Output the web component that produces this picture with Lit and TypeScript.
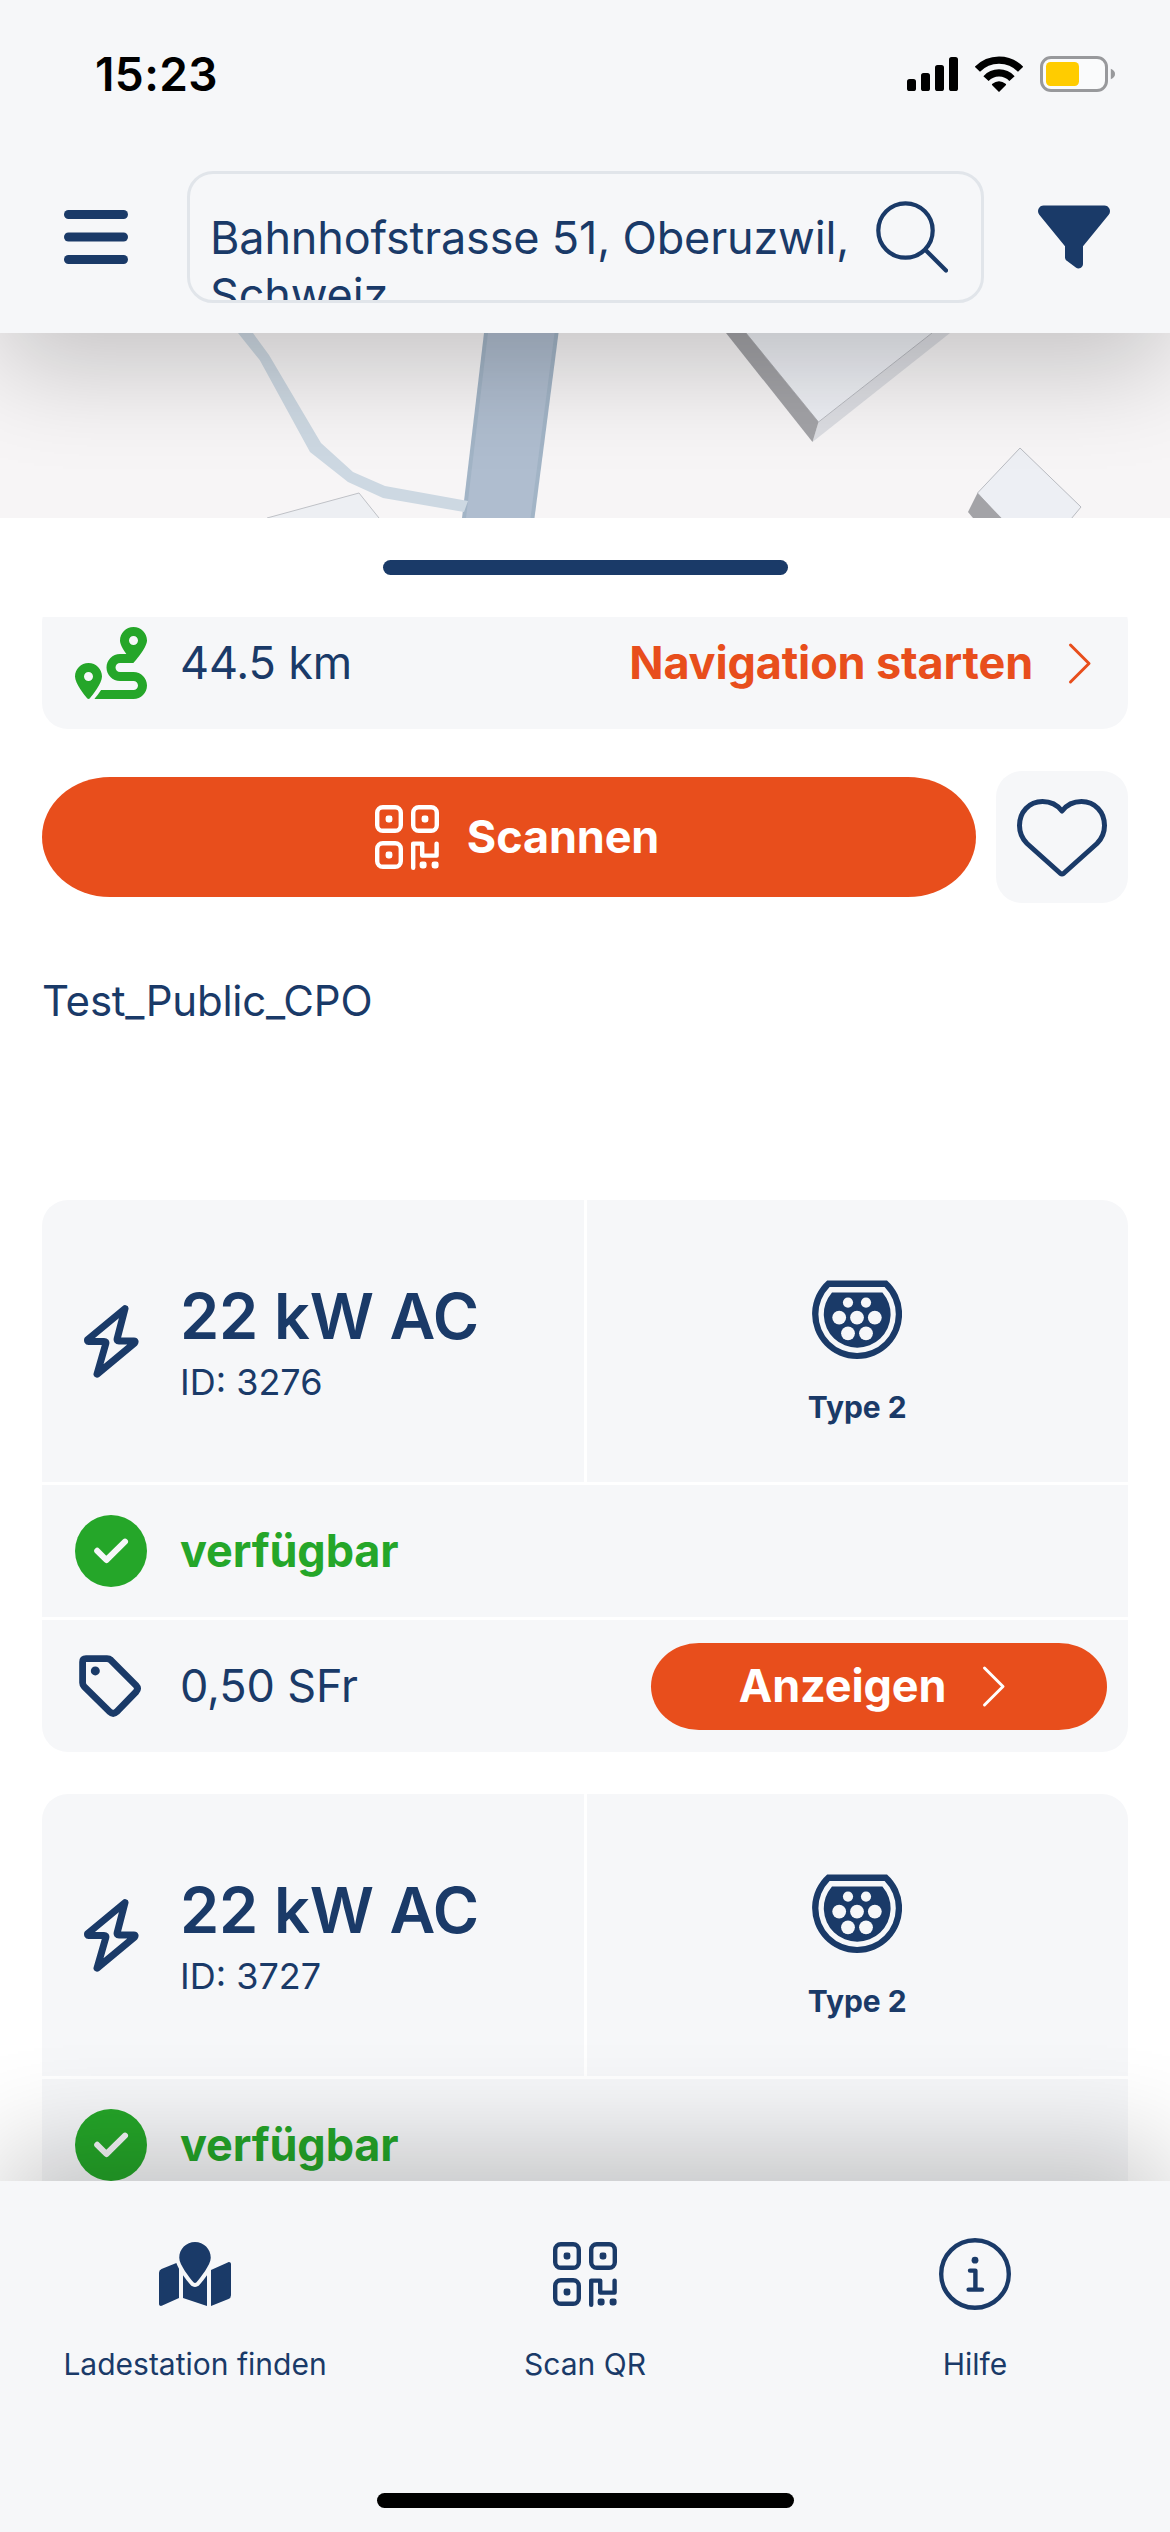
import { LitElement, html, css, svg, nothing } from "lit";
import { customElement, property } from "lit/decorators.js";

const chevron = html`<svg width="24" height="43" viewBox="0 0 24 43" fill="none" stroke="currentColor" stroke-width="3" stroke-linecap="round" stroke-linejoin="round"><path d="M2.5 3 L21 21.5 L2.5 40" /></svg>`;

const qrIcon = html`<svg width="64" height="65" viewBox="0 0 64 65" fill="none" stroke="currentColor" stroke-width="4.4" stroke-linecap="round" stroke-linejoin="round">
  ${[[0, 0], [36, 0], [0, 36]].map(
    ([x, y]) => svg`<rect x=${x + 2.2} y=${y + 2.2} width="23.6" height="23.6" rx="5.6" /><rect x=${x + 10.6} y=${y + 10.6} width="6.8" height="6.8" rx="2.4" fill="currentColor" stroke="none" />`
  )}
  <path d="M38.2 62.8 V38.6 H47.2 V50.6 H61.6 V38.6" />
  <rect x="44.6" y="56.4" width="7" height="7" rx="2.4" fill="currentColor" stroke="none" />
  <rect x="56.6" y="56.4" width="7" height="7" rx="2.4" fill="currentColor" stroke="none" />
</svg>`;

const mapIcon = html`<svg width="72" height="64" viewBox="0 0 576 512" fill="currentColor"><path d="M288 0c-69.59 0-126 56.41-126 126 0 56.26 82.35 158.8 113.9 196.02 6.39 7.54 17.82 7.54 24.2 0C331.65 284.8 414 182.26 414 126 414 56.41 357.59 0 288 0zM20.12 215.95A32.006 32.006 0 0 0 0 245.66v250.32c0 11.32 11.43 19.06 21.94 14.86L160 448V214.92c-8.84-15.98-16.07-31.54-21.25-46.42L20.12 215.95zM288 359.67c-14.07 0-27.38-6.18-36.51-16.96-19.66-23.2-40.57-49.62-59.49-76.72v182l192 64V266c-18.92 27.09-39.82 53.52-59.49 76.72-9.13 10.77-22.44 16.95-36.51 16.95zm266.06-198.51L416 224v288l139.88-55.95A31.996 31.996 0 0 0 576 426.34V176.02c0-11.32-11.43-19.06-21.94-14.86z" /></svg>`;

const infoIcon = html`<svg width="72" height="72" viewBox="0 0 72 72" fill="none" stroke="currentColor" stroke-width="4.4" stroke-linecap="round" stroke-linejoin="round">
  <circle cx="36" cy="36" r="33.8" />
  <path d="M31 32.6 H36.4 V51.6 M29.6 51.6 H43" />
  <circle cx="36" cy="22.2" r="3.4" fill="currentColor" stroke="none" />
</svg>`;

const boltIcon = html`<svg width="55" height="73" viewBox="0 0 55 73" fill="none" stroke="currentColor" stroke-width="7" stroke-linecap="round" stroke-linejoin="round"><path d="M41 3.6 L3.6 34.6 Q3.2 36.4 4.6 36.4 H20 Q22.4 36.4 21.8 38.6 L13 69.2 L50.6 38 Q51.8 36 50 36 H35 Q32.6 36 33.2 33.6 Z" /></svg>`;

const tagIcon = html`<svg width="64" height="62" viewBox="0 0 64 62" fill="none" stroke="currentColor" stroke-width="6.8" stroke-linejoin="round">
  <path d="M7 3.6 H28 Q30.2 3.6 31.8 5.1 L57 30.4 Q60 33.6 57 36.8 L37.6 56.8 Q34.2 60 30.8 56.8 L5.2 31.6 Q3.6 30 3.6 27.8 V7 Q3.6 3.6 7 3.6 Z" />
  <circle cx="16.3" cy="15.9" r="4.5" fill="currentColor" stroke="none" />
</svg>`;

const checkIcon = html`<svg width="72" height="72" viewBox="0 0 72 72" fill="none">
  <circle cx="36" cy="36" r="36" fill="#25a629" />
  <path d="M22.2 35.8 L31.4 45 L50 26.6" stroke="#f6f7f9" stroke-width="6" stroke-linecap="round" stroke-linejoin="round" />
</svg>`;

const routeIcon = html`<svg width="72" height="72" viewBox="0 0 512 512" fill="#25a629"><path d="M416 320h-96c-17.6 0-32-14.4-32-32s14.4-32 32-32h96s96-107 96-160-43-96-96-96-96 43-96 96c0 25.5 22.2 63.4 45.3 96H320c-52.9 0-96 43.1-96 96s43.1 96 96 96h96c17.6 0 32 14.4 32 32s-14.4 32-32 32H185.5c-16 24.8-33.8 47.7-47.3 64H416c52.9 0 96-43.1 96-96s-43.1-96-96-96zm0-256c17.7 0 32 14.3 32 32s-14.3 32-32 32-32-14.3-32-32 14.3-32 32-32zM96 256c-53 0-96 43-96 96 0 50 70 135 86 154 6 7 14 7 20 0C122 487 192 402 192 352c0-53-43-96-96-96zm0 128c-17.7 0-32-14.3-32-32s14.3-32 32-32 32 14.3 32 32-14.3 32-32 32z" /></svg>`;

const plugIcon = html`<svg width="90" height="80" viewBox="0 0 90 80">
  <path fill="#1a3a68" d="M15.2 .4 H75 A45 45 0 1 1 15.2 .4 Z" />
  <path fill="#f6f7f9" d="M17.6 7 H72.6 A38.7 38.7 0 1 1 17.6 7 Z" />
  <path fill="#1a3a68" d="M20 12.4 H70.4 A33.4 33.4 0 1 1 20 12.4 Z" />
  <g fill="#f6f7f9">
    ${[[36, 22.6, 5.1], [54, 22.6, 5.1], [27.2, 37.6, 6.9], [45, 37.6, 6.9], [62.8, 37.6, 6.9], [36, 53.3, 6.9], [54, 53.3, 6.9]].map(
      ([x, y, r]) => svg`<circle cx=${x} cy=${y} r=${r} />`
    )}
  </g>
</svg>`;

@customElement("station-card")
export class StationCard extends LitElement {
  @property() power = "";
  @property() stationId = "";
  @property() price = "";

  static styles = css`
    :host { display: flex; flex-direction: column; gap: 3px; border-radius: 26px; overflow: hidden; flex: none; color: #1a3a68; }
    svg { display: block; flex: none; }
    .top { display: flex; gap: 3px; height: 282px; }
    .cell { flex: 1; background: #f6f7f9; display: flex; align-items: center; box-sizing: border-box; }
    .icon { width: 72px; display: flex; justify-content: center; margin: 0 33px; flex: none; }
    .info { display: flex; flex-direction: column; padding-top: 1px; }
    .power { font-size: 63px; font-weight: 600; line-height: 76px; letter-spacing: -0.15px; }
    .id { font-size: 36px; line-height: 45px; margin-top: 6px; }
    .plug { flex-direction: column; padding-top: 80px; }
    .plug span { font-size: 30px; font-weight: 700; line-height: 36px; margin-top: 29px; }
    .row { height: 132px; background: #f6f7f9; display: flex; align-items: center; font-size: 45px; letter-spacing: -0.15px; }
    .row span { padding-bottom: 2px; }
    .ok { color: #25a629; font-weight: 700; }
    .grow { flex: 1; }
    .btn { width: 456px; height: 87px; box-sizing: border-box; padding-right: 13px; margin-right: 21px; background: #e84e1c; color: #fff; border-radius: 48px / 43.5px; display: flex; align-items: center; justify-content: center; font-weight: 700; gap: 36px; }
  `;

  render() {
    return html`
      <div class="top">
        <div class="cell">
          <div class="icon">${boltIcon}</div>
          <div class="info"><div class="power">${this.power}</div><div class="id">ID: ${this.stationId}</div></div>
        </div>
        <div class="cell plug">${plugIcon}<span>Type 2</span></div>
      </div>
      <div class="row"><div class="icon">${checkIcon}</div><span class="ok">verfügbar</span></div>
      ${this.price
        ? html`<div class="row">
            <div class="icon">${tagIcon}</div>
            <span class="grow">${this.price}</span>
            <div class="btn"><span>Anzeigen</span>${chevron}</div>
          </div>`
        : nothing}
    `;
  }
}

@customElement("app-root")
export class AppRoot extends LitElement {
  static styles = css`
    :host { display: flex; flex-direction: column; width: 1170px; height: 2532px; overflow: hidden; background: #fff; color: #1a3a68; font-family: Inter, "Liberation Sans", sans-serif; font-size: 45px; }
    svg { display: block; flex: none; }
    .header { height: 333px; flex: none; background: #f6f7f9; position: relative; z-index: 2; box-shadow: 0 36px 96px rgba(0, 0, 0, 0.2); }
    .status { height: 132px; box-sizing: border-box; padding: 16px 55px 0 95px; display: flex; align-items: center; justify-content: space-between; color: #000; }
    .time { font-size: 46px; font-weight: 600; letter-spacing: 0.4px; }
    .signals { display: flex; align-items: center; gap: 17px; }
    .search { display: flex; align-items: center; height: 132px; padding: 0 60px 0 64px; margin-top: 39px; }
    .field { width: 797px; height: 132px; box-sizing: border-box; border: 3px solid #e1e5ea; border-radius: 26px; margin: 0 54px 0 59px; display: flex; overflow: hidden; padding: 35px 33px 0 20px; justify-content: space-between; }
    .query { line-height: 57px; width: 660px; letter-spacing: -0.16px; }
    .glass { margin-top: -9px; }
    .map { height: 185px; flex: none; }
    .sheet { flex: 1; min-height: 0; background: #fff; display: flex; flex-direction: column; }
    .grip { width: 405px; height: 15px; border-radius: 8px; background: #1a3a68; margin: 42px auto; flex: none; }
    .scroll { flex: 1; min-height: 0; overflow: hidden; display: flex; flex-direction: column; padding: 0 42px; }
    .route { margin-top: -20px; height: 132px; flex: none; background: #f6f7f9; border-radius: 26px; display: flex; align-items: center; padding: 0 36px 0 33px; letter-spacing: -0.15px; }
    .km { margin-left: 33px; flex: 1; padding-bottom: 2px; }
    .start { color: #e84e1c; font-weight: 700; margin-right: 35px; padding-bottom: 2px; }
    .start-chevron { color: #e84e1c; }
    .actions { display: flex; align-items: center; gap: 20px; height: 132px; margin-top: 42px; flex: none; }
    .scan { flex: 1; height: 120px; box-sizing: border-box; padding-left: 16px; background: #e84e1c; color: #fff; border-radius: 68px / 60px; display: flex; align-items: center; justify-content: center; gap: 28px; font-weight: 700; letter-spacing: -0.15px; }
    .scan span { padding-bottom: 2px; }
    .fav { width: 132px; height: 132px; box-sizing: border-box; padding-top: 2px; border-radius: 26px; background: #f6f7f9; display: flex; align-items: center; justify-content: center; }
    .operator { font-size: 42px; line-height: 54px; margin: 71px 0 172px 0; flex: none; letter-spacing: -0.22px; }
    station-card + station-card { margin-top: 42px; }
    .tabs { height: 351px; flex: none; background: #f6f7f9; position: relative; z-index: 2; box-shadow: 0 -36px 96px rgba(0, 0, 0, 0.2); display: flex; flex-direction: column; align-items: center; }
    .items { display: flex; align-self: stretch; height: 312px; }
    .tab { flex: 1; display: flex; flex-direction: column; align-items: center; font-size: 30px; line-height: 36px; padding-top: 57px; }
    .glyph { height: 72px; display: flex; align-items: center; margin-bottom: 36px; }
    .home { width: 417px; height: 15px; border-radius: 8px; background: #000; }
  `;

  render() {
    return html`
      <div class="header">
        <div class="status">
          <div class="time">15:23</div>
          <div class="signals">
            <svg width="51" height="36" viewBox="0 0 51 36"><rect x="0" y="23" width="9" height="12" rx="2.6" /><rect x="14" y="17" width="9" height="18" rx="2.6" /><rect x="28" y="9" width="9" height="26" rx="2.6" /><rect x="42" y="1" width="9" height="34" rx="2.6" /></svg>
            <svg width="48" height="36" viewBox="0 0 48 36"><g fill="none" stroke="#000" stroke-width="7.2"><path d="M2.4 13.3 A30 30 0 0 1 45.6 13.3" /><path d="M11 22.6 A17.8 17.8 0 0 1 37 22.6" /></g><path d="M24 36 L17 29 Q16.6 28.3 17.4 27.7 Q20.4 25.2 24 25.2 T30.6 27.7 Q31.4 28.3 31 29 Z" /></svg>
            <svg width="75" height="36" viewBox="0 0 75 36"><rect x="1.5" y="1.5" width="65" height="33" rx="9.5" fill="#fafbfc" stroke="#98999c" stroke-width="3" /><rect x="6" y="6" width="33" height="24" rx="4.5" fill="#ffcc00" /><path fill="#98999c" d="M70.8 12.8 Q75 14.5 75 18 T70.8 23.2 Z" /></svg>
          </div>
        </div>
        <div class="search">
          <svg width="64" height="54" viewBox="0 0 64 54" fill="#1a3a68"><rect width="64" height="9" rx="4.5" /><rect y="22.5" width="64" height="9" rx="4.5" /><rect y="45" width="64" height="9" rx="4.5" /></svg>
          <div class="field">
            <div class="query">Bahnhofstrasse 51, Oberuzwil, Schweiz</div>
            <svg class="glass" width="73" height="73" viewBox="0 0 73 73" fill="none" stroke="#1a3a68" stroke-width="4.2" stroke-linecap="round"><circle cx="30.5" cy="30.5" r="27.2" /><path d="M50.5 50 L71 70.5" /></svg>
          </div>
          <svg width="72" height="72" viewBox="0 0 512 512" fill="#1a3a68"><path d="M3.9 54.9C10.5 40.9 24.5 32 40 32H472c15.5 0 29.5 8.9 36.1 22.9s4.6 30.5-5.2 42.5L320 320.9V448c0 12.1-6.8 23.2-17.7 28.6s-23.8 4.3-33.5-3l-64-48c-8.1-6-12.8-15.5-12.8-25.6V320.9L9 97.3C-.7 85.4-2.8 68.8 3.9 54.9z" /></svg>
        </div>
      </div>

      <div class="map">
        <svg width="1170" height="185" viewBox="0 0 1170 185">
          <rect width="1170" height="185" fill="#f7f5f6" />
          <path fill="#edeff3" stroke="#bfc1c6" stroke-width="1" d="M267 185 L359 160 L379 185" />
          <path fill="#a2b4c6" d="M484 0 H558.5 L534.5 185 H462 Z" />
          <path fill="#afbdcf" d="M488 0 H554.5 L530.5 185 H466 Z" />
          <path fill="#cdd8e2" d="M238 0 L259.7 27 L310 119 L348 149 L383 165 L464 179 L468 168 L385 153 L353 139 L321 110 L269 22 L253 0 Z" />
          <path fill="#dcdde2" d="M932 0 H950 L812.5 109 L818.5 89 Z" />
          <path fill="#edeff4" stroke="#b9bbc1" stroke-width="1" d="M746 0 L818.5 89 L932 0" />
          <path fill="#a3a3a7" d="M726 0 H746 L818.5 89 L812.5 109 Z" />
          <path fill="#edeff4" stroke="#b9bbc1" stroke-width="1" d="M1001 186 L977.5 160 L1020 115 L1081 174 L1071 186" />
          <path fill="#a3a3a7" d="M977.5 160 L1001.5 185 H973 L968 179 Z" />
        </svg>
      </div>

      <div class="sheet">
        <div class="grip"></div>
        <div class="scroll">
          <div class="route">
            ${routeIcon}
            <span class="km">44.5 km</span>
            <span class="start">Navigation starten</span>
            <span class="start-chevron">${chevron}</span>
          </div>
          <div class="actions">
            <div class="scan">${qrIcon}<span>Scannen</span></div>
            <div class="fav">
              <svg width="90" height="78" viewBox="0 0 90 78" fill="none" stroke="#1a3a68" stroke-width="5" stroke-linejoin="round"><path d="M45 12 C40 5.5 33 2.5 25.5 2.5 C12 2.5 2.5 13 2.5 26.5 C2.5 34 5.5 40 10 44.5 L43.5 74.5 Q45 75.6 46.5 74.5 L80 44.5 C84.5 40 87.5 34 87.5 26.5 C87.5 13 78 2.5 64.5 2.5 C57 2.5 50 5.5 45 12 Z" /></svg>
            </div>
          </div>
          <div class="operator">Test_Public_CPO</div>
          <station-card power="22 kW AC" .stationId=${"3276"} price="0,50 SFr"></station-card>
          <station-card power="22 kW AC" .stationId=${"3727"}></station-card>
        </div>
      </div>

      <div class="tabs">
        <div class="items">
          <div class="tab"><div class="glyph">${mapIcon}</div>Ladestation finden</div>
          <div class="tab"><div class="glyph">${qrIcon}</div>Scan QR</div>
          <div class="tab"><div class="glyph">${infoIcon}</div>Hilfe</div>
        </div>
        <div class="home"></div>
      </div>
    `;
  }
}
